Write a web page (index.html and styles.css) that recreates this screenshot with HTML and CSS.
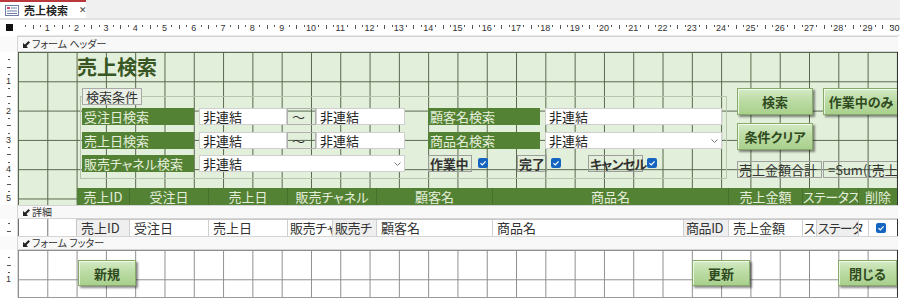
FILE: index.html
```html
<!DOCTYPE html>
<html lang="ja">
<head>
<meta charset="utf-8">
<title>売上検索</title>
<link rel="stylesheet" href="styles.css">
</head>
<body>
<div class="app">
  <div class="tabbar">
    <div class="tab">
      <svg class="tab-icon" width="14" height="11" viewBox="0 0 14 11">
        <rect x="0.5" y="0.5" width="13" height="10" fill="#fff" stroke="#6f7fa6"/>
        <rect x="2" y="2" width="3" height="2" fill="#d9416b"/>
        <rect x="6" y="2.5" width="6" height="1" fill="#6f7fa6"/>
        <rect x="2" y="5.5" width="10" height="1" fill="#6f7fa6"/>
        <rect x="2" y="8" width="10" height="1" fill="#6f7fa6"/>
      </svg>
      <span class="tab-title">売上検索</span>
      <span class="tab-close">✕</span>
    </div>
  </div>

  <div class="hruler-row">
    <div class="corner"><span class="selbox"></span></div>
    <div class="hruler">
      <span class="cm"><b>1</b></span><span class="cm"><b>2</b></span><span class="cm"><b>3</b></span><span class="cm"><b>4</b></span><span class="cm"><b>5</b></span><span class="cm"><b>6</b></span><span class="cm"><b>7</b></span><span class="cm"><b>8</b></span><span class="cm"><b>9</b></span><span class="cm"><b>10</b></span><span class="cm"><b>11</b></span><span class="cm"><b>12</b></span><span class="cm"><b>13</b></span><span class="cm"><b>14</b></span><span class="cm"><b>15</b></span><span class="cm"><b>16</b></span><span class="cm"><b>17</b></span><span class="cm"><b>18</b></span><span class="cm"><b>19</b></span><span class="cm"><b>20</b></span><span class="cm"><b>21</b></span><span class="cm"><b>22</b></span><span class="cm"><b>23</b></span><span class="cm"><b>24</b></span><span class="cm"><b>25</b></span><span class="cm"><b>26</b></span><span class="cm"><b>27</b></span><span class="cm"><b>28</b></span><span class="cm"><b>29</b></span><span class="cm last"><b>30</b></span>
    </div>
  </div>

  <div class="secbar first">
    <div class="sec-corner"></div>
    <div class="sec-label"><svg class="sec-arrow" width="7" height="7" viewBox="0 0 7 7"><path d="M0 7 L0 2 L2 3.5 L5.5 0 L7 1.5 L3.5 5 L5 7 Z" fill="#222"/></svg>フォーム ヘッダー</div>
  </div>

  <div class="section header-sec">
    <div class="vruler">
      <div class="vcm"><b>1</b></div><div class="vcm"><b>2</b></div><div class="vcm"><b>3</b></div><div class="vcm"><b>4</b></div><div class="vcm"><b>5</b></div>
    </div>
    <div class="canvas header-canvas">
      <div class="ctl title">売上検索</div>
      <div class="ctl frame"></div>
      <div class="ctl sec-lbl">検索条件</div>

      <div class="ctl glbl r1 cA">受注日検索</div>
      <div class="ctl tb r1 cB">非連結</div>
      <div class="ctl tilde r1">～</div>
      <div class="ctl tb r1 cC">非連結</div>

      <div class="ctl glbl r2 cA">売上日検索</div>
      <div class="ctl tb r2 cB">非連結</div>
      <div class="ctl tilde r2">～</div>
      <div class="ctl tb r2 cC">非連結</div>

      <div class="ctl glbl r3 cA">販売チャネル検索</div>
      <div class="ctl tb combo r3 cBC">非連結<span class="drop"><svg width="7" height="4" viewBox="0 0 7 4"><path d="M0.5 0.5 L3.5 3.5 L6.5 0.5" fill="none" stroke="#777" stroke-width="1"/></svg></span></div>

      <div class="ctl glbl r1 cD">顧客名検索</div>
      <div class="ctl tb r1 cE">非連結</div>
      <div class="ctl glbl r2 cD">商品名検索</div>
      <div class="ctl tb combo r2 cE">非連結<span class="drop"><svg width="7" height="4" viewBox="0 0 7 4"><path d="M0.5 0.5 L3.5 3.5 L6.5 0.5" fill="none" stroke="#777" stroke-width="1"/></svg></span></div>

      <div class="ctl cblbl r3 k1">作業中</div>
      <span class="ctl cb k1cb"><svg width="10" height="10" viewBox="0 0 10 10"><path d="M2.5 5.2 L4.3 7 L7.6 3.4" fill="none" stroke="#fff" stroke-width="1.2"/></svg></span>
      <div class="ctl cblbl r3 k2">完了</div>
      <span class="ctl cb k2cb"><svg width="10" height="10" viewBox="0 0 10 10"><path d="M2.5 5.2 L4.3 7 L7.6 3.4" fill="none" stroke="#fff" stroke-width="1.2"/></svg></span>
      <div class="ctl cblbl r3 k3">キャンセル</div>
      <span class="ctl cb k3cb"><svg width="10" height="10" viewBox="0 0 10 10"><path d="M2.5 5.2 L4.3 7 L7.6 3.4" fill="none" stroke="#fff" stroke-width="1.2"/></svg></span>

      <div class="ctl btn b-search">検索</div>
      <div class="ctl btn b-working">作業中のみ</div>
      <div class="ctl btn b-clear">条件クリア</div>

      <div class="ctl sum-lbl">売上金額合計</div>
      <div class="ctl sum-box">=Sum([売上</div>

      <div class="ctl colhdr">
        <span class="w52">売上ID</span><span class="w79">受注日</span><span class="w79">売上日</span><span class="w89">販売チャネル</span><span class="w116">顧客名</span><span class="w236">商品名</span><span class="w74">売上金額</span><span class="w56 tight">ステータス</span><span class="w39">削除</span>
      </div>
    </div>
  </div>

  <div class="secbar">
    <div class="sec-corner"></div>
    <div class="sec-label"><svg class="sec-arrow" width="7" height="7" viewBox="0 0 7 7"><path d="M0 7 L0 2 L2 3.5 L5.5 0 L7 1.5 L3.5 5 L5 7 Z" fill="#222"/></svg>詳細</div>
  </div>

  <div class="section detail-sec">
    <div class="vruler"></div>
    <div class="canvas detail-canvas">
      <div class="detail-row">
        <span class="d grey w52">売上ID</span><span class="d w79">受注日</span><span class="d w79">売上日</span><span class="d w45 snug">販売チャ</span><span class="d grey w44 snug">販売チ</span><span class="d w116">顧客名</span><span class="d w191">商品名</span><span class="d grey w45 snug">商品ID</span><span class="d w74">売上金額</span><span class="d w14 nopad">ス</span><span class="d grey w42 nopad">ステータ</span><span class="d w10"></span><span class="d w29 cbcell"><span class="cb"><svg width="10" height="10" viewBox="0 0 10 10"><path d="M2.5 5.2 L4.3 7 L7.6 3.4" fill="none" stroke="#fff" stroke-width="1.2"/></svg></span></span>
      </div>
    </div>
  </div>

  <div class="secbar">
    <div class="sec-corner"></div>
    <div class="sec-label"><svg class="sec-arrow" width="7" height="7" viewBox="0 0 7 7"><path d="M0 7 L0 2 L2 3.5 L5.5 0 L7 1.5 L3.5 5 L5 7 Z" fill="#222"/></svg>フォーム フッター</div>
  </div>

  <div class="section footer-sec">
    <div class="vruler">
      <div class="vcm"><b>1</b></div>
    </div>
    <div class="canvas footer-canvas">
      <div class="ctl btn f-new">新規</div>
      <div class="ctl btn f-update">更新</div>
      <div class="ctl btn f-close">閉じる</div>
    </div>
  </div>
</div>
</body>
</html>
```

FILE: styles.css
```css
* { box-sizing: border-box; }

html, body {
  margin: 0;
  padding: 0;
  background: #ffffff;
}

body {
  width: 900px;
  height: 301px;
  overflow: hidden;
  font-family: "Noto Sans CJK JP", "Noto Sans", sans-serif;
  font-feature-settings: "palt";
  color: #222;
}

.app {
  width: 900px;
  display: flex;
  flex-direction: column;
}

/* ---------- tab bar ---------- */
.tabbar {
  height: 20px;
  background: #f0f0f0;
  border-bottom: 2px solid #e2e2e2;
  display: flex;
}

.tab {
  width: 86px;
  height: 18px;
  background: #ffffff;
  border-top: 2px solid #b8383b;
  display: flex;
  align-items: center;
  padding-left: 5px;
  white-space: nowrap;
}

.tab-icon { flex: 0 0 auto; }

.tab-title {
  margin-left: 5px;
  font-size: 11px;
  font-weight: bold;
  line-height: 14px;
  color: #222;
  white-space: nowrap;
}

.tab-close {
  margin-left: 11px;
  font-family: "DejaVu Sans", sans-serif;
  font-size: 9px;
  line-height: 12px;
  color: #444;
}

/* ---------- horizontal ruler ---------- */
.hruler-row {
  height: 16px;
  display: flex;
  background: #ffffff;
}

.corner {
  width: 18px;
  height: 16px;
  display: flex;
  padding: 4px 0 0 6px;
}

.selbox {
  width: 7px;
  height: 7px;
  background: #111;
}

.hruler {
  flex: 1;
  display: flex;
  border-bottom: 1px solid #e6e6e6;
}

.cm {
  flex: 0 0 29.3px;
  height: 15px;
  display: flex;
  justify-content: flex-end;
  align-items: center;
  background-image:
    linear-gradient(#555, #555),
    linear-gradient(#555, #555),
    linear-gradient(#555, #555);
  background-size: 1px 2px, 1px 4px, 1px 2px;
  background-position: 7px 5px, 14.6px 5px, 22px 5px;
  background-repeat: no-repeat;
}

.cm.last { flex-basis: 25px; justify-content: flex-start; }

.cm b {
  font-family: "Liberation Sans", sans-serif;
  font-weight: normal;
  font-size: 9px;
  line-height: 10px;
  color: #333;
  transform: translateX(50%);
  margin-top: 1px;
}

.cm.last b { transform: none; margin-left: 22px; }

/* ---------- section bars ---------- */
.secbar {
  height: 14px;
  display: flex;
}

.secbar.first { height: 16px; }

.sec-corner {
  width: 18px;
  border-right: 1px solid #d6d6d6;
  background: #fafafa;
}

.sec-label {
  width: 880px;
  background: #f8f8f8;
  border-top: 1px solid #d4d4d4;
  border-bottom: 1px solid #d4d4d4;
  font-size: 10px;
  line-height: 12px;
  color: #333;
  display: flex;
  align-items: center;
  padding-left: 5px;
}

.sec-arrow { margin-right: 2px; }

/* ---------- sections ---------- */
.section {
  display: flex;
}

.vruler {
  width: 18px;
  background: #ffffff;
  border-right: 1px solid #d6d6d6;
  display: flex;
  flex-direction: column;
}

.detail-sec .vruler {
  background-image:
    linear-gradient(#555, #555),
    linear-gradient(#555, #555);
  background-size: 2px 1px, 4px 1px;
  background-position: 8px 4px, 7px 12px;
  background-repeat: no-repeat;
}

.vcm {
  flex: 0 0 29.3px;
  display: flex;
  flex-direction: column;
  justify-content: flex-end;
  align-items: center;
  background-image:
    linear-gradient(#555, #555),
    linear-gradient(#555, #555),
    linear-gradient(#555, #555);
  background-size: 2px 1px, 4px 1px, 2px 1px;
  background-position: 8px 7px, 7px 14.6px, 8px 22px;
  background-repeat: no-repeat;
}

.vcm b {
  font-family: "Liberation Sans", sans-serif;
  font-weight: normal;
  font-size: 9px;
  line-height: 10px;
  color: #333;
  transform: translateY(50%);
}

.canvas {
  position: relative;
  width: 880px;
  overflow: hidden;
  border-right: 1px solid #333;
}

.header-sec { height: 153px; }
.detail-sec { height: 17px; }
.footer-sec { height: 48px; }

.header-canvas {
  background-color: #e2efda;
  background-image:
    linear-gradient(to right, #56664b 1px, transparent 1px),
    linear-gradient(to bottom, #56664b 1px, transparent 1px);
  background-size: 29.3px 100%, 100% 29.3px;
}

.detail-canvas {
  background-color: #ffffff;
  background-image: linear-gradient(to right, #6f6f6f 1px, transparent 1px);
  background-size: 29.3px 100%;
}

.footer-canvas {
  background-color: #ffffff;
  background-image:
    linear-gradient(to right, #8e8e8e 1px, transparent 1px),
    linear-gradient(to bottom, #8e8e8e 1px, transparent 1px);
  background-size: 29.3px 100%, 100% 29.3px;
  border-bottom: 1px solid #9a9a9a;
}

/* ---------- controls on the design canvas ---------- */
.ctl {
  position: absolute;
  font-size: 13px;
  line-height: 15px;
  white-space: nowrap;
}

.title {
  left: 59px;
  top: 1px;
  font-size: 20px;
  line-height: 28px;
  font-weight: bold;
  color: #375623;
}

.frame {
  left: 62px;
  top: 44px;
  width: 647px;
  height: 83px;
  border: 1px solid #b9c6ad;
}

.sec-lbl {
  left: 64px;
  top: 36px;
  width: 60px;
  height: 17px;
  background: #e9efe4;
  border: 1px solid #a9a9a9;
  color: #333;
  padding-left: 3px;
}

.r1 { top: 56px; height: 17px; }
.r2 { top: 80px; height: 17px; }
.r3 { top: 103px; height: 17px; }

.cA { left: 64px; width: 112px; }
.cB { left: 181px; width: 88px; }
.cC { left: 298px; width: 89px; }
.cBC { left: 181px; width: 206px; }
.cD { left: 410px; width: 112px; }
.cE { left: 527px; width: 177px; }

.glbl {
  background: #548235;
  color: #e4eedb;
  padding-left: 2px;
  line-height: 17px;
}

.tb {
  background: #ffffff;
  border: 1px solid #cfcfcf;
  color: #222;
  padding-left: 3px;
}

.combo .drop {
  position: absolute;
  right: 1px;
  top: 1px;
  width: 11px;
  height: 13px;
  display: flex;
  align-items: center;
  justify-content: center;
  background: #fff;
}

.tilde {
  left: 269px;
  width: 29px;
  border: 1px solid #b0b0b0;
  color: #333;
  text-align: center;
  padding-right: 6px;
}

.cblbl {
  border: 1px solid #9d9d9d;
  color: #333;
  font-weight: bold;
  padding-left: 1px;
  letter-spacing: -0.3px;
}

.k1 { left: 410px; width: 44px; }
.k2 { left: 499px; width: 30px; }
.k3 { left: 570px; width: 55px; letter-spacing: -0.7px; }

.cb {
  width: 10px;
  height: 10px;
  background: #1565c0;
  border-radius: 2px;
  display: flex;
}

.k1cb { left: 460px; top: 106px; }
.k2cb { left: 533px; top: 106px; }
.k3cb { left: 629px; top: 106px; }

.btn {
  display: flex;
  align-items: center;
  justify-content: center;
  background: linear-gradient(#d4eac4 0%, #bcdca5 45%, #a9d08d 100%);
  border: 1px solid #86ab69;
  box-shadow: inset 1px 1px 0 rgba(255, 255, 255, 0.7), 2px 2px 2px rgba(0, 0, 0, 0.45);
  color: #2f4a1f;
  font-weight: bold;
  font-size: 13px;
}

.b-search { left: 719px; top: 36px; width: 76px; height: 27px; }
.b-working { left: 805px; top: 36px; width: 76px; height: 27px; }
.b-clear { left: 719px; top: 71px; width: 76px; height: 27px; }

.sum-lbl {
  left: 719px;
  top: 109px;
  width: 85px;
  height: 17px;
  border: 1px solid #a0a0a0;
  color: #333;
  padding-left: 1px;
}

.sum-box {
  left: 805px;
  top: 109px;
  width: 76px;
  height: 17px;
  border: 1px solid #a0a0a0;
  color: #333;
  padding-left: 4px;
}

.colhdr {
  left: 59px;
  top: 136px;
  width: 820px;
  height: 17px;
  display: flex;
  background: #548235;
  color: #e4eedb;
  line-height: 17px;
}

.colhdr span {
  min-width: 0;
  text-align: center;
  border-left: 1px solid #46702b;
  white-space: nowrap;
}

.colhdr span:first-child { border-left: none; }

.colhdr .tight { letter-spacing: -0.6px; }

.w10 { flex: 0 0 10px; }
.w14 { flex: 0 0 14px; }
.w29 { flex: 0 0 29px; }
.w39 { flex: 0 0 39px; }
.w42 { flex: 0 0 42px; }
.w44 { flex: 0 0 44px; }
.w45 { flex: 0 0 45px; }
.w52 { flex: 0 0 52px; }
.w56 { flex: 0 0 56px; }
.w74 { flex: 0 0 74px; }
.w79 { flex: 0 0 79px; }
.w89 { flex: 0 0 89px; }
.w116 { flex: 0 0 116px; }
.w191 { flex: 0 0 191px; }
.w236 { flex: 0 0 236px; }

/* ---------- detail row ---------- */
.detail-row {
  margin-left: 59px;
  width: 820px;
  height: 17px;
  display: flex;
  border-top: 1px solid #c9c9c9;
  background: #ffffff;
}

.d {
  min-width: 0;
  height: 16px;
  font-size: 13px;
  line-height: 16px;
  color: #333;
  padding-left: 4px;
  border-left: 1px solid #cfcfcf;
  white-space: nowrap;
}

.d.snug { padding-left: 2px; letter-spacing: -0.4px; }

.d.nopad { padding-left: 1px; letter-spacing: -0.8px; }

.d:first-child { border-left: none; }

.d.grey { background: #efefef; }

.cbcell {
  display: flex;
  align-items: center;
  padding-left: 7px;
}

/* ---------- footer buttons ---------- */
.f-new { left: 60px; top: 10px; width: 58px; height: 26px; }
.f-update { left: 674px; top: 10px; width: 58px; height: 26px; }
.f-close { left: 820px; top: 10px; width: 59px; height: 26px; }
```
